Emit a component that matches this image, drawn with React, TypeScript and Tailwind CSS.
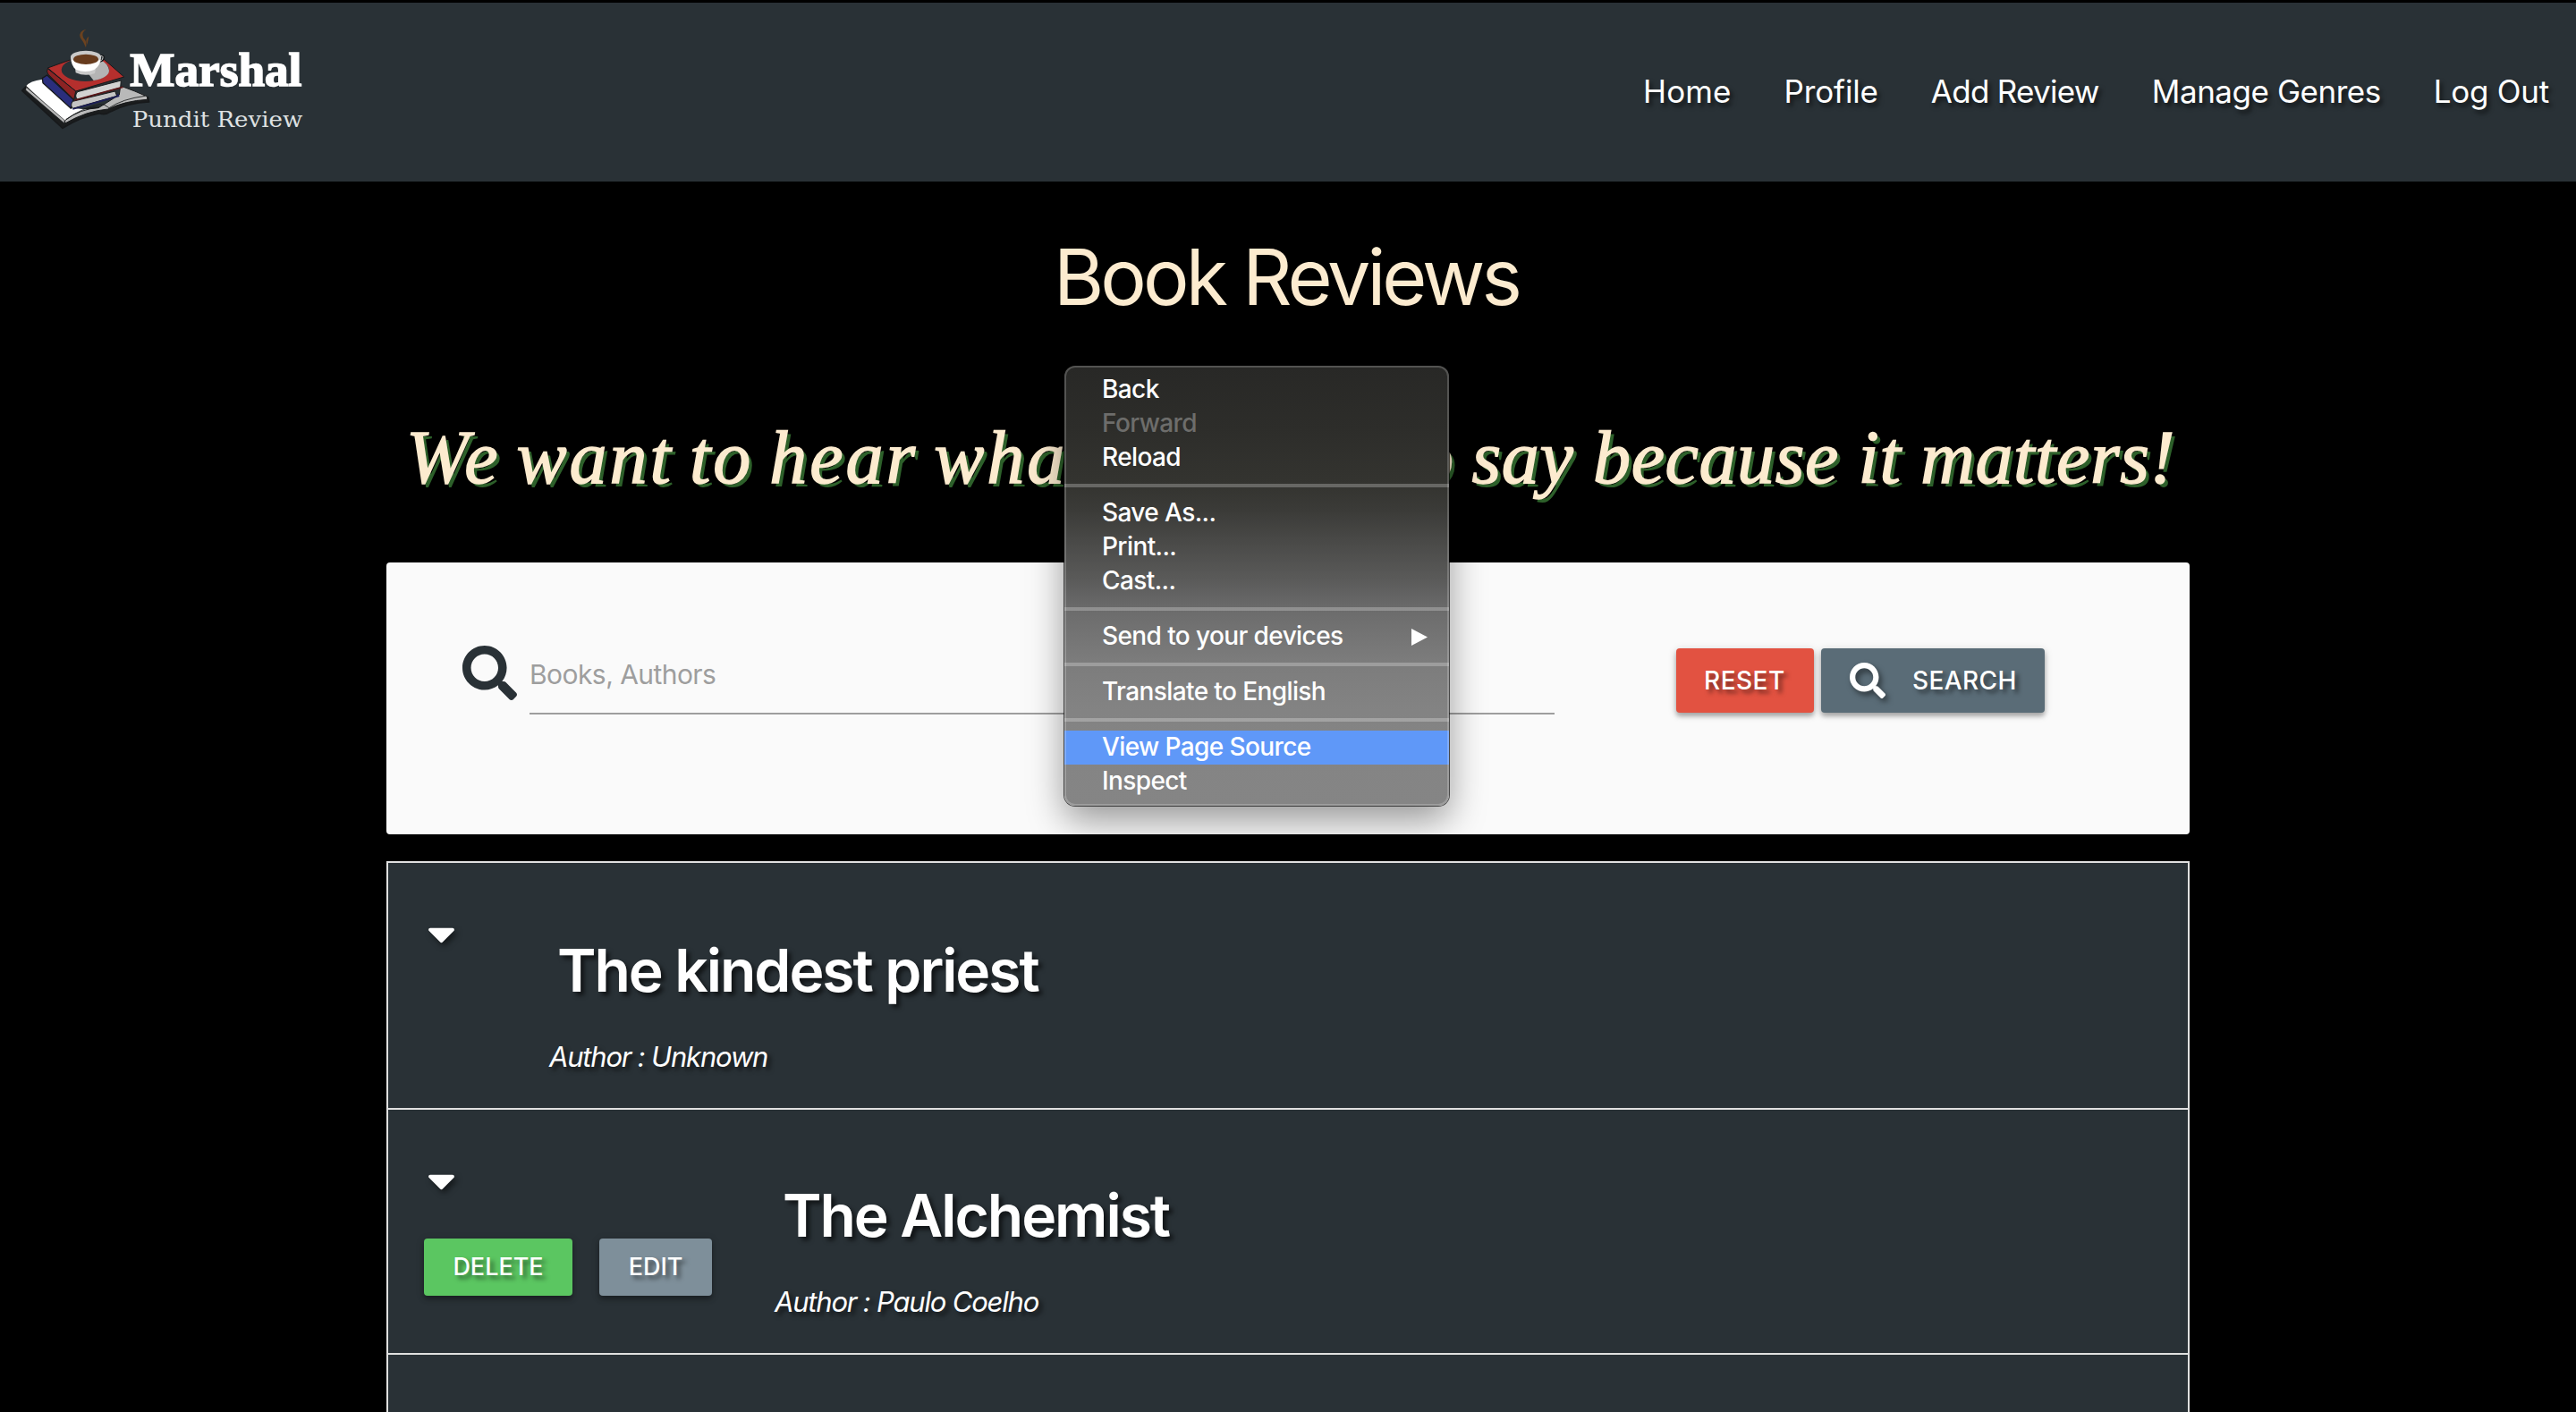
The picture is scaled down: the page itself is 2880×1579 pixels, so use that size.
import { FaCaretDown, FaSearch } from 'react-icons/fa';

const navLinks = [
  { label: 'Home', tracking: 'tracking-[0.1px]' },
  { label: 'Profile', tracking: 'tracking-[-0.14px]' },
  { label: 'Add Review', tracking: 'tracking-[-0.72px]' },
  { label: 'Manage Genres', tracking: 'tracking-[-0.46px]' },
  { label: 'Log Out', tracking: 'tracking-[-0.26px]' },
];

function Logo() {
  return (
    <svg className="ml-5 mt-6 h-[120px] w-[320px] shrink-0" viewBox="60 81 960 360" aria-label="Marshal Pundit Review">
      <g stroke="#17191b" strokeWidth="5" strokeLinejoin="round">
        {/* open book */}
        <path d="M74 304 L94 284 L208 404 Q285 352 350 362 Q420 330 496 326 L500 342 Q430 345 372 374 Q352 388 334 380 Q270 392 210 430 Z" fill="#1b1d1e" />
        <path d="M88 288 Q100 272 142 266 L238 362 L300 368 Q250 384 216 408 Z" fill="#ffffff" stroke="none" />
        <path d="M88 292 L216 403 L216 414 L86 302 Z" fill="#b9b9b9" strokeWidth="2" />
        <path d="M218 404 Q270 364 330 362 L400 318 L404 288 Q455 306 494 324 L494 334 Q420 338 362 366 Q290 372 218 414 Z" fill="#b9b9b9" strokeWidth="3" />
        <path d="M222 400 Q280 360 336 350 Q350 348 366 362 Q410 332 486 322" fill="none" strokeWidth="2.5" />
        {/* blue book */}
        <path d="M142 262 L158 252 L246 334 L238 364 L144 278 Z" fill="#2a2e7c" strokeWidth="4" />
        <path d="M244 340 L386 306 L392 322 L244 364 Q234 352 244 340 Z" fill="#c4c4c4" strokeWidth="3" />
        <path d="M244 366 L398 322 L394 316" fill="none" stroke="#1c1e58" strokeWidth="5" />
        {/* red book */}
        <path d="M160 228 L232 202 L350 200 L416 258 L254 306 Z" fill="#b52f2d" strokeWidth="3" />
        <path d="M160 230 Q154 240 162 250 L248 334 L254 306 Z" fill="#8c2324" strokeWidth="3" />
        <path d="M260 308 L406 270 L404 294 L260 334 Q248 322 260 308 Z" fill="#d2d2d2" strokeWidth="3" />
        <path d="M250 336 L412 292" fill="none" stroke="#5c1719" strokeWidth="5" />
      </g>
      {/* saucer */}
      <ellipse cx="286" cy="234" rx="80" ry="39" fill="#293136" />
      <path d="M286 234 L314 270 Q366 260 366 236 Q362 212 336 200 Z" fill="#b4b4b4" />
      {/* cup */}
      <path d="M252 228 L254 244 Q286 258 318 246 L322 226 Z" fill="#c9c9c9" />
      <path d="M334 190 Q348 182 348 194 Q346 206 330 206" fill="none" stroke="#15181a" strokeWidth="7" />
      <path d="M334 190 Q346 184 345 194 Q344 204 330 206" fill="none" stroke="#d5d5d5" strokeWidth="3" />
      <path d="M237 188 Q238 222 256 234 Q286 246 316 234 Q338 220 339 188 Z" fill="#ffffff" />
      <ellipse cx="288" cy="191" rx="51" ry="21" fill="#c9c9c9" />
      <ellipse cx="288" cy="199" rx="42" ry="17" fill="#673b1d" />
      <path d="M290 98 Q262 104 269 126 Q282 142 288 160 Q294 142 279 126 Q272 108 290 98 Z M298 122 Q284 132 292 150 Q296 134 298 122 Z" fill="#6b421f" />
      <text x="436" y="289" textLength="576" lengthAdjust="spacingAndGlyphs" fontFamily="'Liberation Serif', serif" fontWeight="700" fontSize="156" fill="#ffffff" stroke="#ffffff" strokeWidth="5">
        Marshal
      </text>
      <text x="443" y="427" textLength="572" lengthAdjust="spacingAndGlyphs" fontFamily="'DejaVu Serif', serif" fontSize="72" fill="#dfe1e2">
        Pundit Review
      </text>
    </svg>
  );
}

function Navbar() {
  return (
    <nav className="mt-[3px] flex h-[200px] shrink-0 justify-between bg-[#293136] pr-[30px]">
      <Logo />
      <ul className="flex h-[198px] items-center gap-[59px] text-[35px] leading-[54px] text-white [text-shadow:3px_4px_5px_rgba(0,0,0,0.6)]">
        {navLinks.map((l) => (
          <li key={l.label} className={l.tracking}>
            {l.label}
          </li>
        ))}
      </ul>
    </nav>
  );
}

const buttonBase =
  'flex items-center rounded-[4px] font-medium text-white shadow-[0_4px_5px_rgba(0,0,0,0.25),0_2px_10px_rgba(0,0,0,0.18)] [text-shadow:4px_4px_5px_rgba(0,0,0,0.5)]';

function SearchCard() {
  return (
    <form className="mt-[67px] flex h-[304px] items-start rounded-[4px] bg-[#fafafa] pl-[85px] pt-[93px]">
      <FaSearch className="size-[61px] text-[#293136]" />
      <div className="ml-[14px] h-[77px] w-[1146px] border-b-2 border-[#9e9e9e] text-[30px] leading-[64px] tracking-[-0.55px] text-[#9e9e9e]">
        Books, Authors
      </div>
      <button type="button" className={`${buttonBase} ml-[136px] mt-[3px] h-[72px] w-[154px] bg-[#e25241] pl-[31px] text-[28px] tracking-[0.5px]`}>
        RESET
      </button>
      <button type="button" className={`${buttonBase} ml-2 mt-[3px] h-[72px] w-[250px] bg-[#5a6c77] pl-8 text-[28px] tracking-[0.4px]`}>
        <FaSearch className="mr-[30px] size-10 drop-shadow-[3px_4px_3px_rgba(0,0,0,0.5)]" />
        SEARCH
      </button>
    </form>
  );
}

type Review = {
  title: string;
  author: string;
  owned: boolean;
  row: string;
  aside: string;
  body: string;
};

const reviews: Review[] = [
  { title: 'The kindest priest', author: 'Unknown', owned: false, row: 'h-[276px]', aside: 'w-[180px]', body: 'pt-[80px]' },
  { title: 'The Alchemist', author: 'Paulo Coelho', owned: true, row: 'h-[274px]', aside: 'w-[432px]', body: 'pt-[78px]' },
];

function ReviewRow({ review }: { review: Review }) {
  return (
    <li className={`flex border-b-2 border-[#e0e0e0] ${review.row}`}>
      <div className={`shrink-0 pl-10 pt-[54px] ${review.aside}`}>
        <FaCaretDown className="ml-1 h-[50px] w-[31px] text-white drop-shadow-[3px_4px_3px_rgba(0,0,0,0.5)]" />
        {review.owned && (
          <div className="mt-10 flex gap-[30px] text-[27px]">
            <button className={`${buttonBase} h-16 w-[166px] justify-center bg-[#5bc661]`}>DELETE</button>
            <button className={`${buttonBase} h-16 w-[126px] justify-center bg-[#7e8f9a]`}>EDIT</button>
          </div>
        )}
      </div>
      <div className={`text-white [text-shadow:4px_4px_5px_rgba(0,0,0,0.6)] ${review.body}`}>
        <h2 className="ml-[9px] text-[66px] font-semibold leading-[80px] tracking-[-2.08px]">{review.title}</h2>
        <p className="mt-[37px] text-[31px] italic leading-[40px] tracking-[-1.2px]">Author : {review.author}</p>
      </div>
    </li>
  );
}

const menuGroups = [
  ['Back', 'Forward', 'Reload'],
  ['Save As...', 'Print...', 'Cast...'],
  ['Send to your devices'],
  ['Translate to English'],
  ['View Page Source', 'Inspect'],
];

function ContextMenu() {
  return (
    <div className="absolute left-[1190px] top-[409px] h-[492px] w-[430px] rounded-[12px] bg-[linear-gradient(to_bottom,#282826_0px,#2d2d2a_70px,#343430_134px,#3b3b38_162px,#484846_193px,#5a5a59_238px,#6c6c6c_274px,#7c7c7c_330px,#838383_385px,#858585_492px)] pt-2 text-[28px] font-medium text-white shadow-[0_0_0_1px_rgba(0,0,0,0.65),0_16px_40px_rgba(0,0,0,0.4)]">
      {menuGroups.map((group, g) => (
        <div key={group[0]}>
          {g > 0 && <div className="my-[10px] h-1 bg-white/25" />}
          {group.map((item) => (
            <div
              key={item}
              className={`flex h-[38px] items-center justify-between pb-[2px] pl-[42px] pr-[24px] leading-[34px] tracking-[-0.6px] ${
                item === 'Forward' ? 'text-[#6d6d6b]' : ''
              } ${item === 'View Page Source' ? 'bg-[#5f98f8]' : ''}`}
            >
              {item}
              {item === 'Send to your devices' && (
                <svg className="mt-[2px] h-[19px] w-[18px]" viewBox="0 0 18 19">
                  <path d="M0 0 L18 9.5 L0 19 Z" fill="#fff" />
                </svg>
              )}
            </div>
          ))}
        </div>
      ))}
      <div className="pointer-events-none absolute inset-0 rounded-[12px] border-2 border-white/20" />
    </div>
  );
}

export default function App() {
  return (
    <div className="relative flex h-[1579px] w-[2880px] flex-col overflow-hidden bg-black font-['Inter',sans-serif]">
      <Navbar />
      <h1 className="mt-[57px] shrink-0 pr-1 text-center text-[86px] leading-[100px] tracking-[-3.9px] text-[#fcebcf]">Book Reviews</h1>
      <main className="mx-auto w-[2016px] shrink-0">
        <p className="mt-[102px] whitespace-nowrap pl-[22px] font-['Liberation_Serif',serif] text-[84px] italic leading-[100px] text-[#fcebcf] [-webkit-text-stroke:1.5px_#fcebcf] [text-shadow:4px_4px_0_#2d602a]">
          <span className="tracking-[3px] [word-spacing:-6px]">We want to hear what</span>
          <span className="tracking-[-0.25px]"> you have to </span>
          <span className="tracking-[0.63px]">say because it matters!</span>
        </p>
        <SearchCard />
        <ul className="mt-[30px] h-[640px] border-x-2 border-t-2 border-[#e0e0e0] bg-[#293136]">
          {reviews.map((r) => (
            <ReviewRow key={r.title} review={r} />
          ))}
        </ul>
      </main>
      <ContextMenu />
    </div>
  );
}
